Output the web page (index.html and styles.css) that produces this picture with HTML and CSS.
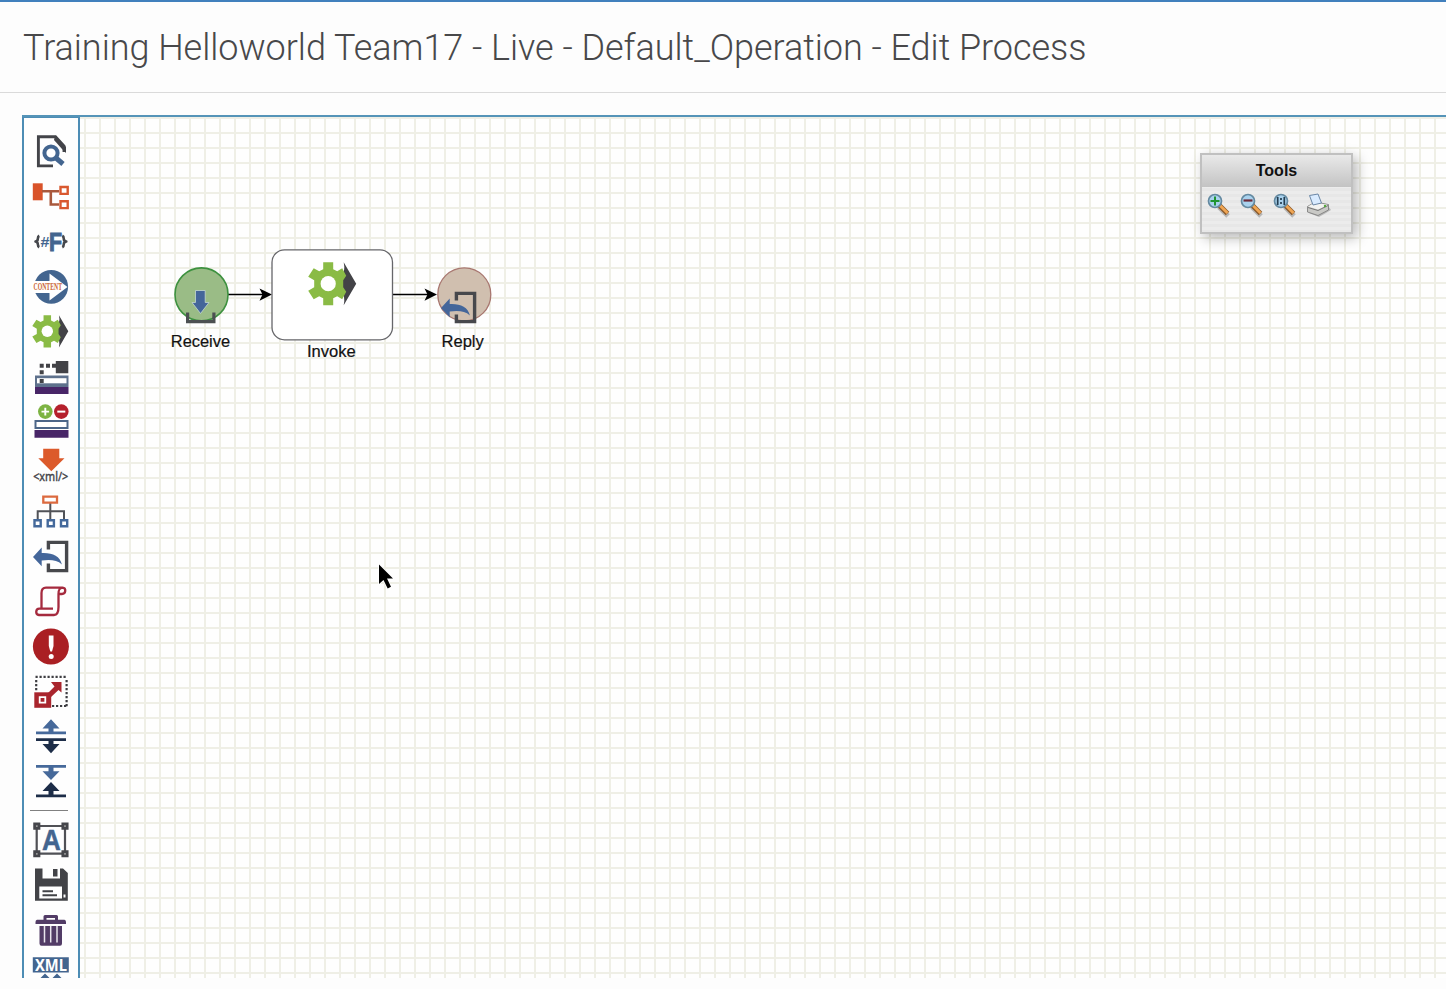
FILE: index.html
```html
<!DOCTYPE html>
<html lang="en">
<head>
<meta charset="utf-8">
<title>Edit Process</title>
<link rel="stylesheet" href="styles.css">
</head>
<body>
<svg class="defs" width="0" height="0">
  <defs>
    <g id="gear">
      <path fill="#434347" d="M15.500-21.500L28 0 15.500 21.500Q17.500 12 13 8V-8Q17.500-12 15.500-21.500Z"/>
      <path fill="#8abb45" d="M-5-21.500H5V-14.500L9-12.500 14-15.500 18-8 15-3.500V3.500L18 8 14 15.500 9 12.500 5 14.500V21.500H-5V14.500L-9 12.500-14.500 15.500-20 7-14 3.500V-3.500L-20-7-14.500-15.500-9-12.500-5-14.500Z"/>
      <circle r="7.600" fill="#fff"/>
    </g>
    <g id="reply">
      <path fill="none" stroke="#47484c" stroke-width="3.400" d="M48.400 549.500V542.400H66.600V570.600H48.400V563.500"/>
      <path fill="#44669a" d="M33 557L41.700 547.500V553C52 552.500 60 555.500 61.900 564.500C57 559.800 50 559.500 41.700 560.500V566.300Z"/>
    </g>
    <g id="lens">
      <path d="M12 14L21 23" stroke="#777" stroke-opacity=".45" stroke-width="5"/>
      <path d="M12 12L20.500 20.500" stroke="#8b5a2c" stroke-width="5"/>
      <path d="M12.500 12L20.500 20" stroke="#f0a654" stroke-width="2.800"/>
      <circle cx="8" cy="8" r="6.500" fill="#a9d2ee" stroke="#6489a0" stroke-width="1.700"/>
    </g>
  </defs>
</svg>

<header class="page-header"><h1 class="page-title">Training Helloworld Team17 - Live - Default_Operation - Edit Process</h1></header>

<main class="editor">
  <nav class="palette">
    <svg class="tool" viewBox="32 129 38 45"><path fill="none" stroke="#434449" stroke-width="2.900" d="M53 165.900H38.400V136.800H55.500L64 146V152"/><path fill="#434449" d="M55 135.400L66 147V153L62 149 54 140Z"/><path d="M56 158L63 164" stroke="#43658f" stroke-width="5"/><circle cx="51" cy="153" r="6.600" fill="#fff" stroke="#43658f" stroke-width="4"/></svg>
    <svg class="tool" viewBox="32 174 38 45"><path fill="#d9532a" d="M32.800 183.300H42.700V200.300H32.800Z"/><path fill="none" stroke="#a9583c" stroke-width="2.600" d="M42 191.300H59M50.800 191V204.500H59"/><path fill="#fff" stroke="#d9582f" stroke-width="2.400" d="M60.500 187H67.700V193.900H60.500ZM60.500 201.200H67.700V208.100H60.500Z"/></svg>
    <svg class="tool" viewBox="32 219 38 45"><path fill="none" stroke="#45474c" stroke-width="2.600" stroke-linejoin="round" d="M39.300 235.800Q37.800 236.500 37.800 239Q37.800 241 35.500 241.500Q37.800 242 37.800 244Q37.800 246.500 39.300 247.200M62.300 235.800Q63.800 236.500 63.800 239Q63.800 241 66.300 241.500Q63.800 242 63.800 244Q63.800 246.500 62.300 247.200"/><text class="sans bold" x="40.500" y="246.500" font-size="15" textLength="9" lengthAdjust="spacingAndGlyphs" fill="#43658f">#</text><text class="sans bold" x="49" y="250.800" font-size="26" textLength="13" lengthAdjust="spacingAndGlyphs" fill="#43658f" stroke="#43658f" stroke-width="1">F</text></svg>
    <svg class="tool" viewBox="32 264 38 45"><circle cx="51.200" cy="286.800" r="16.900" fill="#43658f"/><path fill="#fff" d="M32 281H49.500V273.500L67.500 287 49.500 300.500V293H32Z"/><text class="serif bold" x="33.500" y="290.200" font-size="9.500" textLength="28.500" lengthAdjust="spacingAndGlyphs" fill="#c9632f">CONTENT</text></svg>
    <svg class="tool" viewBox="32 309 38 45"><use href="#gear" transform="translate(47.300 331.300) scale(.75)"/></svg>
    <svg class="tool" viewBox="32 354 38 45"><path fill="#5e718c" d="M35 375.500H68.500V387H35Z"/><path fill="#fff" d="M37 378.200H66.500V383.300H37Z"/><path fill="#482567" d="M35 387H68.500V394H35Z"/><path fill="#424246" d="M55.800 361H68.300V373.300H55.800ZM39.700 363.700H43.700V367.700H39.700ZM46 363.700H50V367.700H46ZM52 363.700H56V367.700H52ZM39.700 370.300H43.700V374.300H39.700ZM39.700 379H43.700V383H39.700Z"/></svg>
    <svg class="tool" viewBox="32 399 38 45"><circle cx="45.300" cy="411.600" r="7.300" fill="#7db343"/><path stroke="#fff" stroke-width="1.900" d="M41.500 411.600H49.100M45.300 407.800V415.400"/><circle cx="61.300" cy="411.600" r="7.300" fill="#b5202c"/><path stroke="#fff" stroke-width="2" d="M57.300 411.600H65.300"/><path fill="#fff" stroke="#4c6688" stroke-width="2" d="M35.500 421H67.500V428H35.500Z"/><path fill="#482567" d="M34.500 430H68.500V437.700H34.500Z"/></svg>
    <svg class="tool" viewBox="32 444 38 45"><path fill="#dc5a2b" d="M43.200 448.800H59.300V458.300H64.500L51.300 471.200 38.300 458.300H43.200Z"/><text class="noto" x="33.200" y="481.200" font-size="12.500" textLength="35" lengthAdjust="spacingAndGlyphs" fill="#434449" stroke="#434449" stroke-width=".4">&lt;xml/&gt;</text></svg>
    <svg class="tool" viewBox="32 489 38 45"><path fill="none" stroke="#505257" stroke-width="2" d="M50.300 503V520M37.700 520V511.300H64V520"/><path fill="#fff" stroke="#dc6a3f" stroke-width="2.300" d="M43.300 496.700H57V502.600H43.300Z"/><path fill="#fff" stroke="#44699b" stroke-width="2.400" d="M34.500 520.200H40.700V526.300H34.500ZM47.700 520.200H53.900V526.300H47.700ZM61 520.200H67.200V526.300H61Z"/></svg>
    <svg class="tool" viewBox="32 534 38 45"><use href="#reply"/></svg>
    <svg class="tool" viewBox="32 579 38 45"><path fill="none" stroke="#a52a3e" stroke-width="2.300" stroke-linejoin="round" d="M41.500 608.500V593C41.500 589 43 587.600 46 587.600H62.500C66.500 588 66 594 62 594H58.500V607C58.500 612 57.500 615 54 615H39C35 614.600 35.500 608.500 39.500 608.700H53M62.500 587.600C59 588 58.500 590 58.500 594"/></svg>
    <svg class="tool" viewBox="32 624 38 45"><circle cx="50.900" cy="646.500" r="18" fill="#aa1f23"/><path fill="#fff" d="M48.800 635.500H53.500V646L52 651.500H50.300L48.800 646Z"/><circle cx="51.200" cy="656.500" r="2.500" fill="#fff"/></svg>
    <svg class="tool" viewBox="32 669 38 45"><path fill="none" stroke="#3e3e42" stroke-width="2.200" stroke-dasharray="2.200 1.800" d="M35.500 676.800H67.200M66.600 680V706.500M36.200 680V692M52 706H67"/><path fill="#a9252d" d="M34.300 692.300H51.200V707.800H34.300Z"/><path fill="#a9252d" stroke="#fff" stroke-width="1.800" d="M39.700 697.200H45.300V702.600H39.700Z"/><path fill="#a9252d" d="M51 682H61.500V692.500L58.500 690 51 697 47.500 693.500 54.500 686.500Z"/></svg>
    <svg class="tool" viewBox="32 714 38 45"><path fill="#46699a" d="M51 719.300L59.500 728.500H53.500V731.600H66V734.300H36V731.600H48.500V728.500H42.500Z"/><path fill="#1d2d48" d="M36 738.200H66V741H53.500V744H59.500L51 753.300 42.500 744H48.500V741H36Z"/></svg>
    <svg class="tool" viewBox="32 759 38 45"><path fill="#46699a" d="M36 765H66V767.700H53.500V771.200H59.500L51 780 42.500 771.200H48.500V767.700H36Z"/><path fill="#1d2d48" d="M51 782L59.500 791H53.500V794.600H66V797.300H36V794.600H48.500V791H42.500Z"/></svg>
    <div class="separator"></div>
    <svg class="tool" viewBox="32 817 38 45"><path fill="none" stroke="#505156" stroke-width="2.200" d="M36.700 826H65V853.700H36.700Z"/><path fill="#999" stroke="#45464b" stroke-width="2.700" d="M34.600 823.900H39V828.300H34.600ZM62.800 823.900H67.200V828.300H62.800ZM34.600 851.600H39V856H34.600ZM62.800 851.600H67.200V856H62.800Z"/><text class="sans bold" x="42" y="850" font-size="29" textLength="18.800" lengthAdjust="spacingAndGlyphs" fill="#43658f" stroke="#43658f" stroke-width=".5">A</text></svg>
    <svg class="tool" viewBox="32 862 38 45"><path fill="#424347" d="M35 868.500H42.500V878.500H60V868.500H63L67.800 873V900.700H35ZM53 869H57.500V876.500H53Z"/><path fill="#fff" d="M39.300 886.500H62V898.500H39.300ZM63.500 894.500H65.500V897.500H63.500Z"/><path stroke="#424347" stroke-width="1.900" d="M42.500 891.200H53M42.500 895.200H57"/></svg>
    <svg class="tool" viewBox="32 907 38 45"><path fill="none" stroke="#523c66" stroke-width="3" stroke-linejoin="round" d="M45 921V916.500H56.500V921"/><path fill="#523c66" d="M37 919.800H64.500Q66 920 66 922V924H35.500V922Q35.500 920 37 919.800ZM39.500 926H62V943.500Q62 945.700 60 945.700H41.500Q39.500 945.700 39.500 943.500Z"/><path stroke="#e9e5ed" stroke-width="1.500" d="M44.500 926V942.500M50.700 926V942.500M57 926V942.500"/></svg>
    <svg class="tool tool-cut" viewBox="32 952 38 26"><path fill="#43658f" d="M32.800 957.300H68.800V972.600H32.800ZM40.500 978L45 973.500 49.500 978ZM52.500 978L57 973.500 61.500 978Z"/><text class="noto bold" x="35" y="970.500" font-size="15.500" textLength="32" lengthAdjust="spacingAndGlyphs" fill="#fff">XML</text></svg>
  </nav>

  <section class="canvas">
    <svg class="diagram" viewBox="80 117 1366 861">
      <g stroke="#000" stroke-width="1.700"><path d="M228 294.500H264M393 294.500H429"/></g>
      <path d="M259.500 288.500L272 294.500 259.500 300.700 262.500 294.500ZM424.500 288.500L437 294.500 424.500 300.700 427.500 294.500Z"/>
      <circle cx="201.500" cy="294.400" r="26.500" fill="#9abc86" stroke="#3d913f" stroke-width="1.600"/>
      <path fill="#44669a" stroke="#c5d8d0" stroke-width=".8" d="M195.500 290.500H205.200V302.500H209L200.500 313.500 192 302.500H195.500Z"/>
      <path fill="none" stroke="#4c5052" stroke-width="3.200" d="M187.600 312.500V321.700H213.900V312.500"/>
      <rect x="272" y="249.800" width="120.500" height="90" rx="12.500" fill="#fff" stroke="#66666a" stroke-width="1.300"/>
      <use href="#gear" transform="translate(328.200 283.700)"/>
      <circle cx="464.300" cy="294.400" r="26.500" fill="#d0bfaf" stroke="#a87770" stroke-width="1.300"/>
      <use href="#reply" transform="translate(408 -249)"/>
      <g class="sans label" font-size="16.500" fill="#111" stroke="#111" stroke-width=".2">
        <text x="170.800" y="346.500" textLength="59.300" lengthAdjust="spacingAndGlyphs">Receive</text>
        <text x="307" y="357" textLength="48.800" lengthAdjust="spacingAndGlyphs">Invoke</text>
        <text x="441.500" y="346.500" textLength="42.300" lengthAdjust="spacingAndGlyphs">Reply</text>
      </g>
      <path stroke="#fff" stroke-width="1.500" paint-order="stroke" d="M379 564.500V584L383.500 580 387.700 588.500 391 586.800 387 578.500H393Z"/>
    </svg>
    <aside class="tools-panel">
      <div class="tools-title">Tools</div>
      <div class="tools-row">
        <svg class="mini" viewBox="0 0 25 25"><use href="#lens"/><path d="M3.500 8H12.500M8 3.500V12.500" stroke="#209433" stroke-width="2"/></svg>
        <svg class="mini" viewBox="0 0 25 25"><use href="#lens"/><path d="M3.500 7.500H12.500" stroke="#6b2838" stroke-width="2.200"/></svg>
        <svg class="mini" viewBox="0 0 25 25"><use href="#lens"/><path d="M4.700 4V12M11.300 4V12M8 5V7M8 9V11" stroke="#233c50" stroke-width="1.700"/></svg>
        <svg class="mini" viewBox="0 0 25 25"><path fill="#888" opacity=".5" d="M3 20L13 24 25 17 22 13Z"/><path fill="#c9c9c6" stroke="#777" stroke-width=".8" d="M1.500 13.500L9 9 22.500 11.500V17L12 22.500 1.500 19Z"/><path fill="#f3f3f1" d="M2 13.500L9 9.500 22 12 12 16.500Z"/><path fill="none" stroke="#777" stroke-width="1" d="M2 14.500L12 17.500 22 12.500"/><path fill="#d9ebff" stroke="#6c87a6" d="M3.500 2.500L12 1 15.500 10 7 12Z"/><circle cx="19" cy="13" r="1.200" fill="#54a83d"/></svg>
      </div>
    </aside>
  </section>
</main>
</body>
</html>
```
FILE: styles.css
```css
* { box-sizing: border-box; }
body {
  margin: 0;
  width: 1446px;
  height: 989px;
  overflow: hidden;
  background: #fdfdfd;
  font-family: "Liberation Sans", Arial, sans-serif;
}
.defs { display: block; }
.page-header {
  height: 93px;
  padding: 24px 0 0 23px;
  border-top: 2px solid #4180bd;
  border-bottom: 1px solid #dadada;
}
.page-title {
  margin: 0;
  font: 300 36px/45px Roboto, sans-serif;
  letter-spacing: -.03px;
  color: #48484a;
  white-space: nowrap;
}
.editor {
  display: flex;
  height: 863px;
  margin: 22px 0 0 22px;
  border-top: 2px solid #5594b8;
}
.palette {
  display: flex;
  flex-direction: column;
  flex: none;
  width: 58px;
  padding: 11px 0 0 8px;
  border: solid #4d8db5;
  border-width: 1px 2px 0 2px;
  background: #fefefe;
  overflow: hidden;
}
.tool { display: block; flex: none; width: 38px; height: 45px; overflow: visible; }
.tool-cut { height: 26px; overflow: hidden; }
.separator {
  flex: none;
  width: 38px;
  height: 13px;
  margin-left: -2px;
  padding-top: 6px;
}
.separator::before { content: ""; display: block; height: 1px; background: #808080; }
.canvas {
  position: relative;
  flex: 1;
  overflow: hidden;
  background-color: #fefefe;
  background-image:
    linear-gradient(90deg, #efefe6 2px, transparent 2px),
    linear-gradient(#efefe6 2px, transparent 2px);
  background-size: 15px 15px;
  background-position: 4px 0, 0 0;
}
.diagram { display: block; width: 1366px; height: 861px; }
.sans { font-family: "Liberation Sans", Arial, sans-serif; }
.serif { font-family: "Liberation Serif", serif; }
.noto { font-family: "Noto Sans", sans-serif; }
.bold { font-weight: 700; }
.tools-panel {
  position: absolute;
  left: 1120px;
  top: 36px;
  width: 153px;
  height: 81px;
  border: 2px solid #c0c0c0;
  background: repeating-linear-gradient(#ececec 0 3px, #e7e7e7 3px 6px);
  box-shadow: 4px 4px 12px rgba(0, 0, 0, .28);
}
.tools-title {
  height: 32px;
  background: linear-gradient(#e9e9e9, #c3c3c3);
  font: 700 16px/31px "Liberation Sans", Arial, sans-serif;
  color: #111;
  text-align: center;
}
.tools-row { display: flex; gap: 8px; padding: 6px 0 0 5px; }
.mini { width: 25px; height: 25px; flex: none; }
```
